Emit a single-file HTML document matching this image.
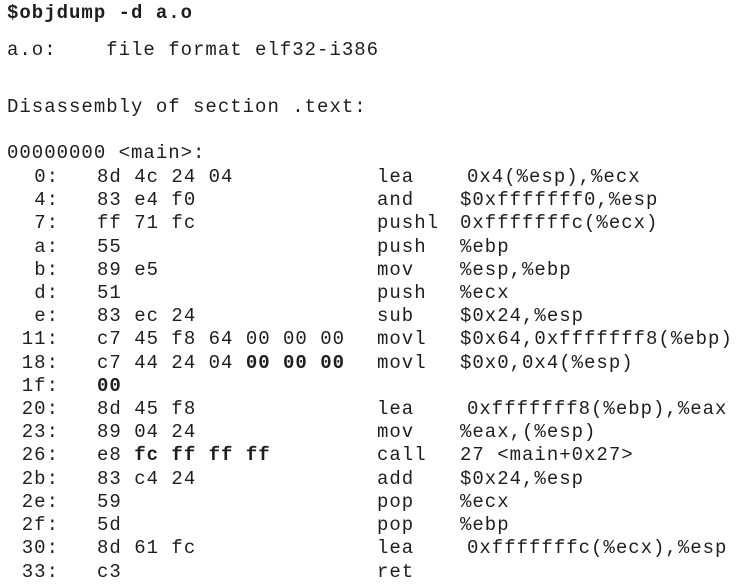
<!DOCTYPE html>
<html><head><meta charset="utf-8"><style>
html,body{margin:0;padding:0;background:#fff;width:737px;height:588px;overflow:hidden}
body{position:relative;font-family:"Liberation Mono",monospace;font-size:19px;color:#1e1e1e}
.l{position:absolute;line-height:22px;white-space:pre;height:22px;letter-spacing:1.0px}
.h{left:7px}
.a{right:678px;text-align:right}
.b{left:97px}
.m{left:377px}
.o{left:460px}
.o2{left:467px}
b{font-weight:bold}
</style></head><body>
<div class="l h" style="top:2px"><b>$objdump -d a.o</b></div>
<div class="l h" style="top:39px">a.o:    file format elf32-i386</div>
<div class="l h" style="top:96px">Disassembly of section .text:</div>
<div class="l h" style="top:142px">00000000 &lt;main&gt;:</div>

<div class="l a" style="top:166px">0:</div><div class="l b" style="top:166px">8d 4c 24 04</div><div class="l m" style="top:166px">lea</div><div class="l o2" style="top:166px">0x4(%esp),%ecx</div>
<div class="l a" style="top:189px">4:</div><div class="l b" style="top:189px">83 e4 f0</div><div class="l m" style="top:189px">and</div><div class="l o" style="top:189px">$0xfffffff0,%esp</div>
<div class="l a" style="top:212px">7:</div><div class="l b" style="top:212px">ff 71 fc</div><div class="l m" style="top:212px">pushl</div><div class="l o" style="top:212px">0xfffffffc(%ecx)</div>
<div class="l a" style="top:236px">a:</div><div class="l b" style="top:236px">55</div><div class="l m" style="top:236px">push</div><div class="l o" style="top:236px">%ebp</div>
<div class="l a" style="top:259px">b:</div><div class="l b" style="top:259px">89 e5</div><div class="l m" style="top:259px">mov</div><div class="l o" style="top:259px">%esp,%ebp</div>
<div class="l a" style="top:282px">d:</div><div class="l b" style="top:282px">51</div><div class="l m" style="top:282px">push</div><div class="l o" style="top:282px">%ecx</div>
<div class="l a" style="top:305px">e:</div><div class="l b" style="top:305px">83 ec 24</div><div class="l m" style="top:305px">sub</div><div class="l o" style="top:305px">$0x24,%esp</div>
<div class="l a" style="top:328px">11:</div><div class="l b" style="top:328px">c7 45 f8 64 00 00 00</div><div class="l m" style="top:328px">movl</div><div class="l o" style="top:328px">$0x64,0xfffffff8(%ebp)</div>
<div class="l a" style="top:352px">18:</div><div class="l b" style="top:352px">c7 44 24 04 <b>00 00 00</b></div><div class="l m" style="top:352px">movl</div><div class="l o" style="top:352px">$0x0,0x4(%esp)</div>
<div class="l a" style="top:375px">1f:</div><div class="l b" style="top:375px"><b>00</b></div>
<div class="l a" style="top:398px">20:</div><div class="l b" style="top:398px">8d 45 f8</div><div class="l m" style="top:398px">lea</div><div class="l o2" style="top:398px">0xfffffff8(%ebp),%eax</div>
<div class="l a" style="top:421px">23:</div><div class="l b" style="top:421px">89 04 24</div><div class="l m" style="top:421px">mov</div><div class="l o" style="top:421px">%eax,(%esp)</div>
<div class="l a" style="top:444px">26:</div><div class="l b" style="top:444px">e8 <b>fc ff ff ff</b></div><div class="l m" style="top:444px">call</div><div class="l o" style="top:444px">27 &lt;main+0x27&gt;</div>
<div class="l a" style="top:468px">2b:</div><div class="l b" style="top:468px">83 c4 24</div><div class="l m" style="top:468px">add</div><div class="l o" style="top:468px">$0x24,%esp</div>
<div class="l a" style="top:491px">2e:</div><div class="l b" style="top:491px">59</div><div class="l m" style="top:491px">pop</div><div class="l o" style="top:491px">%ecx</div>
<div class="l a" style="top:514px">2f:</div><div class="l b" style="top:514px">5d</div><div class="l m" style="top:514px">pop</div><div class="l o" style="top:514px">%ebp</div>
<div class="l a" style="top:537px">30:</div><div class="l b" style="top:537px">8d 61 fc</div><div class="l m" style="top:537px">lea</div><div class="l o2" style="top:537px">0xfffffffc(%ecx),%esp</div>
<div class="l a" style="top:561px">33:</div><div class="l b" style="top:561px">c3</div><div class="l m" style="top:561px">ret</div>
</body></html>
